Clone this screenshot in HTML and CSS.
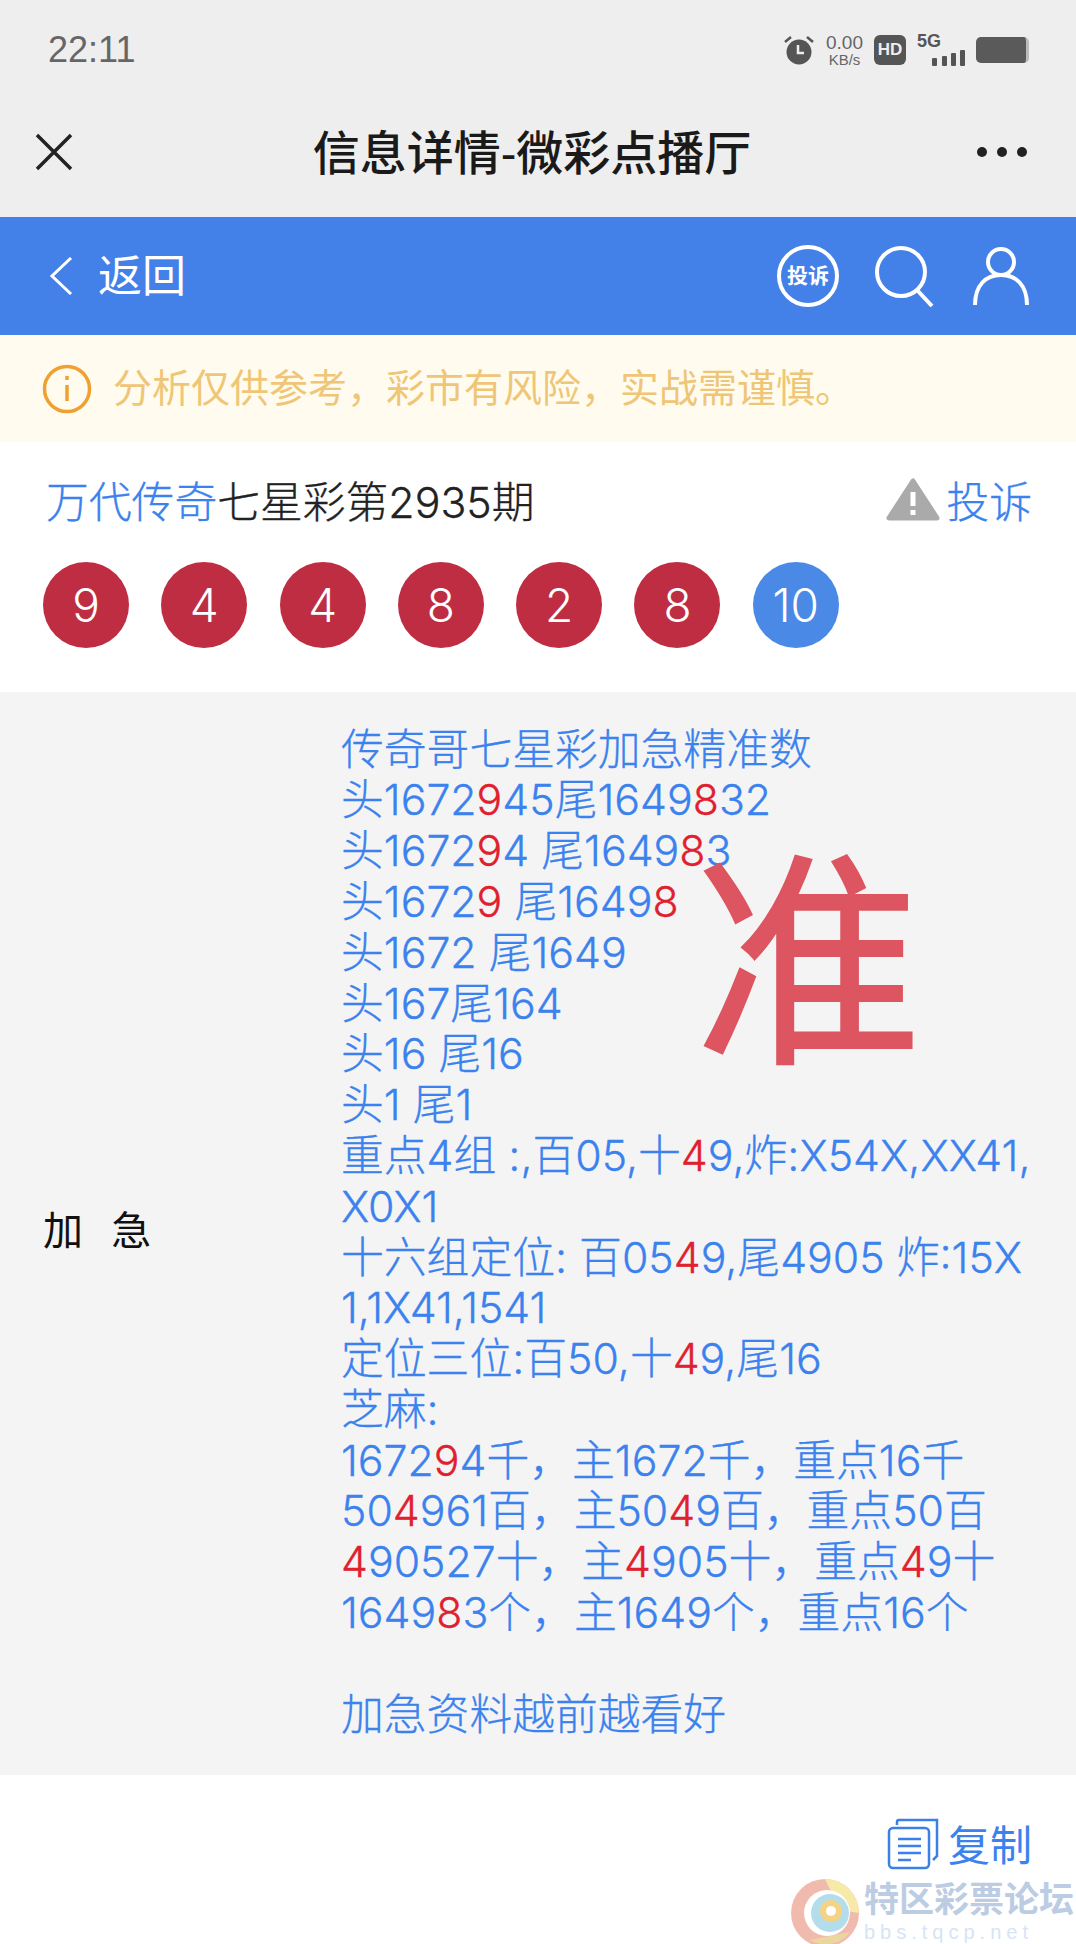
FILE: index.html
```html
<!DOCTYPE html>
<html>
<head>
    <title>信息详情-微彩点播厅</title>
    <link rel="stylesheet" href="styles.css">
</head>
<body>
    <div class="page">
        <div class="statusBar">
            <span class="time">22:11</span>
            <div class="statusIcons">
                <svg width="32" height="30" viewBox="0 0 32 30">
                    <circle cx="16" cy="17" r="12.5" fill="#555"/>
                    <path d="M15 10v8h6" fill="none" stroke="#eee" stroke-width="2.5"/>
                    <path d="M2 7l6-5M30 7l-6-5" stroke="#555" stroke-width="2.5"/>
                </svg>
                <div class="speed"><span>0.00</span><span class="speedUnit">KB/s</span></div>
                <span class="hd">HD</span>
                <div class="signal">
                    <span class="fiveG">5G</span>
                    <svg class="bars" width="36" height="16" viewBox="0 0 36 16">
                        <rect x="3" y="8" width="5" height="8" rx="1" fill="#555"/>
                        <rect x="13" y="6" width="5" height="10" rx="1" fill="#555"/>
                        <rect x="22" y="3" width="5" height="13" rx="1" fill="#555"/>
                        <rect x="31" y="0" width="5" height="16" rx="1" fill="#555"/>
                    </svg>
                </div>
                <div class="battery"></div>
            </div>
        </div>
        <div class="titleBar">
            <svg width="38" height="38" viewBox="0 0 38 38"><path d="M2 2l34 34M36 2L2 36" stroke="#222" stroke-width="3.5" fill="none"/></svg>
            <h1>信息详情-微彩点播厅</h1>
            <div class="dots"><i></i><i></i><i></i></div>
        </div>
        <div class="navBar">
            <svg width="24" height="38" viewBox="0 0 24 38"><path d="M22 1L3 19l19 18" stroke="#fff" stroke-width="3" fill="none"/></svg>
            <span class="backText">返回</span>
            <div class="navIcons">
                <span class="complainCircle">投诉</span>
                <svg width="64" height="62" viewBox="0 0 64 62"><circle cx="27" cy="27" r="24" stroke="#fff" stroke-width="4" fill="none"/><path d="M43 45l15 16" stroke="#fff" stroke-width="4"/></svg>
                <svg width="56" height="60" viewBox="0 0 56 60"><circle cx="28" cy="16" r="13" stroke="#fff" stroke-width="4" fill="none"/><path d="M2 59c0-20 11-30 26-30s26 10 26 30" stroke="#fff" stroke-width="4" fill="none"/></svg>
            </div>
        </div>
        <div class="notice">
            <svg width="50" height="50" viewBox="0 0 50 50"><circle cx="25" cy="25" r="22.5" stroke="#f0a030" stroke-width="3.5" fill="none"/><path d="M25 21v16M25 12v4" stroke="#f0a030" stroke-width="3.5"/></svg>
            <span class="noticeText">分析仅供参考，彩市有风险，实战需谨慎。</span>
        </div>
        <div class="head">
            <div class="headTitle"><span class="blue">万代传奇</span>七星彩第2935期</div>
            <div class="report">
                <svg width="54" height="44" viewBox="0 0 54 44"><path d="M27 4L3 41h48z" fill="#aaa" stroke="#aaa" stroke-width="5" stroke-linejoin="round"/><path d="M27 15v14M27 33v5" stroke="#fff" stroke-width="5"/></svg>
                <span>投诉</span>
            </div>
        </div>
        <div class="balls">
            <span class="ball">9</span>
            <span class="ball">4</span>
            <span class="ball">4</span>
            <span class="ball">8</span>
            <span class="ball">2</span>
            <span class="ball">8</span>
            <span class="ball ballBlue">10</span>
        </div>
        <div class="detail">
            <div class="label">加&nbsp;&nbsp;急</div>
            <div class="content">
                传奇哥七星彩加急精准数<br>
                头1672<b>9</b>45尾1649<b>8</b>32<br>
                头1672<b>9</b>4 尾1649<b>8</b>3<br>
                头1672<b>9</b> 尾1649<b>8</b><br>
                头1672 尾1649<br>
                头167尾164<br>
                头16 尾16<br>
                头1 尾1<br>
                重点4组 :,百05,十<b>4</b>9,炸:X54X,XX41,X0X1<br>
                十六组定位: 百05<b>4</b>9,尾4905 炸:15X1,1X41,1541<br>
                定位三位:百50,十<b>4</b>9,尾16<br>
                芝麻:<br>
                1672<b>9</b>4千，主1672千，重点16千<br>
                50<b>4</b>961百，主50<b>4</b>9百，重点50百<br>
                <b>4</b>90527十，主<b>4</b>905十，重点<b>4</b>9十<br>
                1649<b>8</b>3个，主1649个，重点16个<br>
                <br>
                加急资料越前越看好
            </div>
            <div class="stamp">准</div>
        </div>
        <div class="copyRow">
            <svg width="54" height="52" viewBox="0 0 54 52"><path d="M10 7V4q0-2 2-2h38v36l-4 4" stroke="#3b80e8" stroke-width="2.5" fill="none"/><rect x="2" y="10" width="40" height="40" rx="4" stroke="#3b80e8" stroke-width="2.5" fill="none"/><path d="M11 21h23M11 28h23M11 35h23M11 42h13" stroke="#3b80e8" stroke-width="2.5"/></svg>
            <span class="copyText">复制</span>
        </div>
        <div class="watermark">
            <svg class="wmLogo" width="70" height="70" viewBox="0 0 70 70">
                <circle cx="35" cy="35" r="34" fill="#eeb0a0"/>
                <path d="M35 1a34 34 0 0 1 34 34L50 32z" fill="#f6e79a"/>
                <path d="M20 62a30 30 0 0 0 40-8L40 58z" fill="#e8d090"/>
                <circle cx="37" cy="35" r="23" fill="#fff"/>
                <circle cx="40" cy="35" r="19" fill="#a8d8e8"/>
                <circle cx="41" cy="33" r="11" fill="#f3cc70"/>
                <circle cx="41" cy="33" r="5" fill="#fff"/>
            </svg>
            <div class="wmText">
                <span class="wmName">特区彩票论坛</span>
                <span class="wmUrl">bbs.tqcp.net</span>
            </div>
        </div>
    </div>
</body>
</html>
```
FILE: styles.css
```css
body {
    margin: 0;
    background: #fff;
    font-family: "Liberation Sans", "Noto Sans CJK SC", sans-serif;
}
.page {
    position: relative;
    width: 1076px;
    height: 1944px;
    overflow: hidden;
}
.statusBar {
    display: flex;
    justify-content: space-between;
    align-items: center;
    height: 100px;
    padding: 0 47px 0 48px;
    background: #eee;
    color: #555;
}
.time {
    font-size: 36px;
    color: #666;
}
.statusIcons {
    display: flex;
    align-items: center;
    gap: 11px;
}
.speed {
    display: flex;
    flex-direction: column;
    align-items: center;
    font-size: 19px;
    line-height: 18px;
    color: #666;
}
.speedUnit {
    font-size: 15px;
    line-height: 15px;
}
.hd {
    width: 32px;
    height: 30px;
    border-radius: 6px;
    background: #555;
    color: #eee;
    font-size: 17px;
    font-weight: bold;
    line-height: 30px;
    text-align: center;
}
.signal {
    position: relative;
    width: 48px;
    height: 32px;
}
.fiveG {
    position: absolute;
    left: 0;
    top: -3px;
    font-size: 18px;
    font-weight: bold;
    color: #555;
}
.bars {
    position: absolute;
    right: 0;
    bottom: 0;
}
.battery {
    width: 50px;
    height: 26px;
    border-radius: 5px;
    background: #5a5a5a;
    border-right: 3px solid #bbb;
}
.titleBar {
    display: flex;
    justify-content: space-between;
    align-items: center;
    box-sizing: border-box;
    height: 117px;
    padding: 0 49px 14px 35px;
    background: #eee;
}
.titleBar h1 {
    margin: 0 0 0 14px;
    padding-bottom: 4px;
    font-size: 47px;
    font-weight: 500;
    color: #1a1a1a;
}
.dots {
    display: flex;
    gap: 10px;
}
.dots i {
    width: 10px;
    height: 10px;
    border-radius: 50%;
    background: #222;
}
.navBar {
    display: flex;
    align-items: center;
    height: 118px;
    padding: 0 47px 0 49px;
    background: #4380e8;
    color: #fff;
}
.backText {
    margin-left: 25px;
    padding-bottom: 6px;
    font-size: 44px;
}
.navIcons {
    display: flex;
    align-items: center;
    gap: 35px;
    margin-left: auto;
}
.complainCircle {
    box-sizing: border-box;
    width: 62px;
    height: 62px;
    border: 4px solid #fff;
    border-radius: 50%;
    font-size: 21px;
    font-weight: bold;
    line-height: 54px;
    text-align: center;
}
.notice {
    display: flex;
    align-items: center;
    gap: 21px;
    height: 107px;
    padding-left: 42px;
    background: #fffcef;
    color: #efc677;
    font-size: 39px;
}
.noticeText {
    padding-bottom: 7px;
}
.head {
    display: flex;
    justify-content: space-between;
    align-items: center;
    height: 110px;
    padding: 4px 44px 0 46px;
    box-sizing: border-box;
    font-family: Inter, "Noto Sans CJK SC", sans-serif;
    font-weight: 300;
    font-size: 42.8px;
    color: #222;
    -webkit-text-stroke: 0.3px;
}
.blue {
    color: #3b82ee;
}
.report {
    display: flex;
    align-items: center;
    gap: 6px;
    color: #3b82ee;
}
.balls {
    display: flex;
    gap: 32.3px;
    height: 140px;
    padding: 10px 0 0 43px;
    box-sizing: border-box;
}
.ball {
    width: 86px;
    height: 86px;
    border-radius: 50%;
    background: #bf2d42;
    color: #fff;
    font-family: Inter, sans-serif;
    font-weight: 300;
    font-size: 46px;
    line-height: 86px;
    text-align: center;
}
.ballBlue {
    background: #4a8ae6;
}
.detail {
    position: relative;
    display: flex;
    align-items: center;
    box-sizing: border-box;
    height: 1083px;
    background: #f4f4f4;
}
.label {
    width: 341px;
    padding: 0 0 12px 43px;
    box-sizing: border-box;
    font-size: 40px;
    letter-spacing: 2px;
    color: #111;
}
.content {
    width: 690px;
    padding-bottom: 2px;
    font-family: Inter, "Noto Sans CJK SC", sans-serif;
    font-weight: 300;
    font-size: 42.8px;
    line-height: 50.8px;
    word-break: break-all;
    color: #3b82ee;
    -webkit-text-stroke: 0.3px;
}
.content b {
    font-weight: 300;
    color: #e0202e;
}
.stamp {
    position: absolute;
    left: 694px;
    top: 139px;
    font-size: 228px;
    line-height: 1.2;
    color: #dc5560;
    -webkit-text-stroke: 2px #dc5560;
}
.copyRow {
    display: flex;
    justify-content: flex-end;
    align-items: center;
    gap: 7px;
    box-sizing: border-box;
    height: 143px;
    padding: 0 44px 6px 0;
    color: #3b82ee;
    font-size: 42px;
}
.copyText {
    padding-bottom: 3px;
}
.watermark {
    position: absolute;
    right: 0;
    bottom: -4px;
    display: flex;
    gap: 4px;
    width: 286px;
}
.wmLogo {
    opacity: 0.85;
}
.wmText {
    display: flex;
    flex-direction: column;
    white-space: nowrap;
}
.wmName {
    font-size: 35px;
    line-height: 44px;
    font-weight: bold;
    color: #bccde3;
}
.wmUrl {
    font-size: 20px;
    line-height: 20px;
    letter-spacing: 5px;
    color: #d6e4f6;
}
```
